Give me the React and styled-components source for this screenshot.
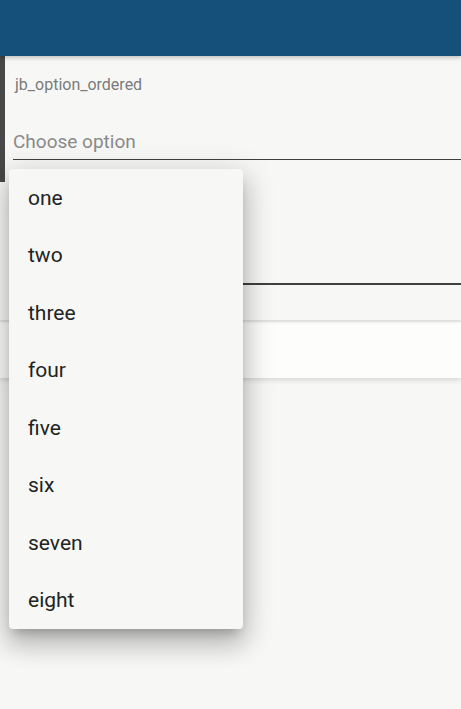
import React from "react";
import styled, { createGlobalStyle } from "styled-components";

const GlobalStyle = createGlobalStyle`
  html, body {
    margin: 0;
    padding: 0;
    background: #f7f8f6;
    font-family: Roboto, "Noto Sans", "Liberation Sans", sans-serif;
  }
`;

const Screen = styled.div`
  position: relative;
  width: 461px;
  height: 709px;
  overflow: hidden;
  background: #f7f8f6;
`;

const AppBar = styled.header`
  position: relative;
  z-index: 2;
  height: 56px;
  background: #15507a;
  box-shadow: 0 2px 4px rgba(0, 0, 0, 0.22);
`;

const Panel = styled.section`
  position: relative;
  z-index: 1;
  display: flex;
  align-items: flex-start;
  height: 264px;
  background: #f7f8f6;
  box-shadow: 0 2px 3px rgba(0, 0, 0, 0.1);
`;

const EdgeStrip = styled.div`
  width: 5px;
  height: 126px;
  background: #474847;
`;

const Form = styled.div`
  flex: 1;
  display: flex;
  flex-direction: column;
  padding-top: 20px;
`;

const Label = styled.div`
  margin-left: 10px;
  font-size: 16px;
  line-height: 18px;
  color: #7a7a7a;
`;

const Field = styled.div`
  margin-left: 8px;
  height: ${(p) => p.$height}px;
  display: flex;
  align-items: flex-end;
  padding-bottom: 6px;
  box-sizing: border-box;
  border-bottom: ${(p) => p.$line}px solid #3f403f;
`;

const Placeholder = styled.span`
  font-size: 19px;
  line-height: 22px;
  color: #8a8a8a;
`;

const BottomBar = styled.div`
  margin-top: 2px;
  height: 56px;
  background: #fdfdfc;
  box-shadow: 0 2px 5px rgba(0, 0, 0, 0.14);
`;

const Menu = styled.ul`
  position: absolute;
  z-index: 5;
  left: 9px;
  top: 169px;
  width: 234px;
  margin: 0;
  padding: 0;
  list-style: none;
  background: #f7f8f6;
  border-radius: 4px;
  box-shadow: 0 8px 10px -5px rgba(0, 0, 0, 0.22),
    0 16px 24px 2px rgba(0, 0, 0, 0.16), 0 6px 30px 5px rgba(0, 0, 0, 0.13);
`;

const MenuItem = styled.li`
  height: 57.5px;
  display: flex;
  align-items: center;
  padding-left: 19px;
  font-size: 21px;
  color: #222322;
`;

const options = ["one", "two", "three", "four", "five", "six", "seven", "eight"];

export default function App() {
  return (
    <>
      <GlobalStyle />
      <Screen>
        <AppBar />
        <Panel>
          <EdgeStrip />
          <Form>
            <Label>jb_option_ordered</Label>
            <Field $height={66} $line={1.5}>
              <Placeholder>Choose option</Placeholder>
            </Field>
            <Field $height={125} $line={2} />
          </Form>
        </Panel>
        <BottomBar />
        <Menu>
          {options.map((o) => (
            <MenuItem key={o}>{o}</MenuItem>
          ))}
        </Menu>
      </Screen>
    </>
  );
}
